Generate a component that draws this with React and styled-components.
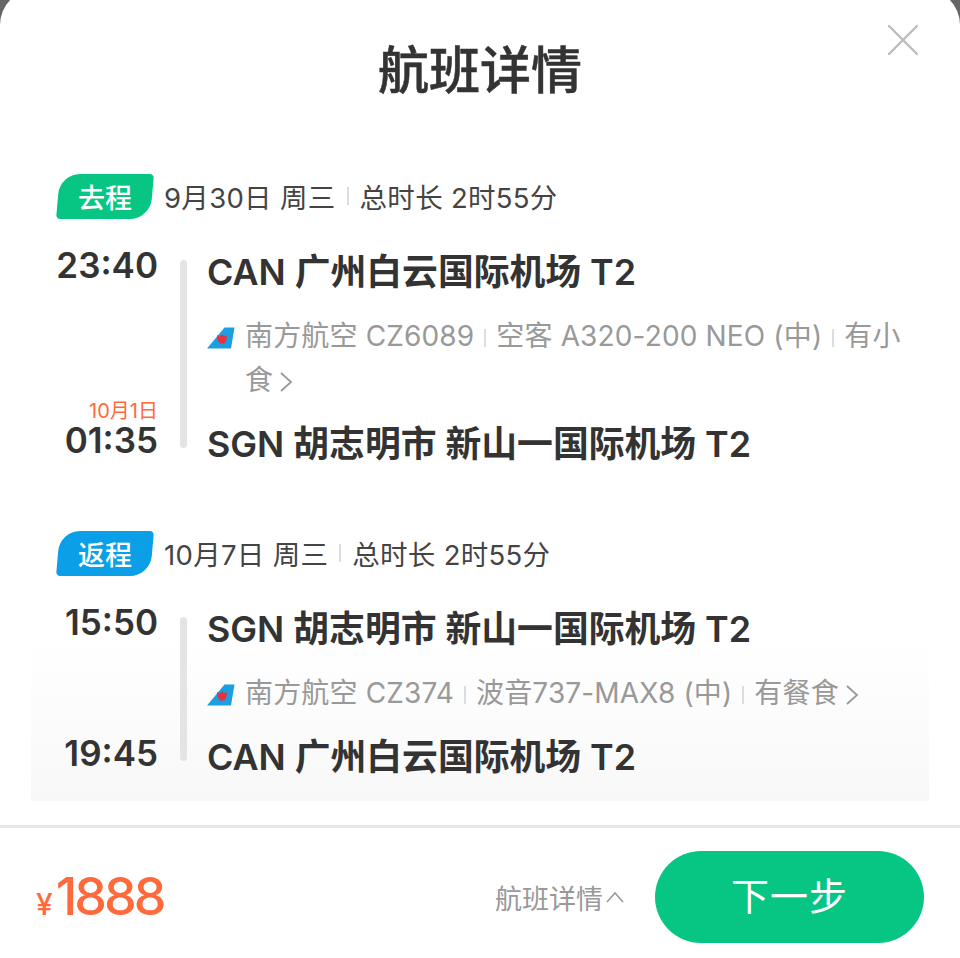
import React from 'react';
import styled, { createGlobalStyle } from 'styled-components';

const GlobalStyle = createGlobalStyle`
  html, body {
    margin: 0;
    padding: 0;
    height: 958px;
    overflow: hidden;
    background: #666666;
    font-family: Inter, "Noto Sans CJK SC", sans-serif;
  }
`;

const Sheet = styled.div`
  width: 960px;
  height: 969px;
  margin-top: -11px;
  background: #ffffff;
  border-radius: 36px 36px 0 0;
  display: flex;
  flex-direction: column;
`;

const Header = styled.header`
  height: 158px;
  padding-top: 11px;
  box-sizing: border-box;
  display: flex;
  justify-content: center;
  position: relative;
`;

const Title = styled.h1`
  margin: 36px 0 0;
  font-size: 51px;
  line-height: 70px;
  font-weight: 500;
  -webkit-text-stroke: 0.5px #333333;
  color: #333333;
`;

const CloseButton = styled.button`
  position: absolute;
  top: 35px;
  right: 41px;
  width: 32px;
  height: 32px;
  padding: 0;
  border: none;
  background: none;
`;

const Body = styled.main`
  flex: 1;
  margin: 0 31px 24px;
  padding: 28px 26px 0;
  background: linear-gradient(#ffffff, #f8f8f8) bottom / 100% 160px no-repeat;
`;

const Section = styled.section`
  height: ${(p) => p.$height}px;
`;

const SectionHead = styled.div`
  display: flex;
  align-items: center;
  height: 45px;
`;

const Tag = styled.span`
  position: relative;
  z-index: 0;
  width: 96px;
  height: 45px;
  display: flex;
  align-items: center;
  justify-content: center;
  font-size: 27px;
  font-weight: 500;
  color: #ffffff;

  &::before {
    content: '';
    position: absolute;
    z-index: -1;
    inset: 0 1px;
    background: ${(p) => p.$color};
    border-radius: 20px 4px 20px 4px;
    transform: skewX(-5deg);
  }
`;

const Summary = styled.div`
  margin: -2px 0 0 11px;
  display: flex;
  align-items: center;
  font-size: 27.5px;
  letter-spacing: 0.3px;
  color: #444444;
  white-space: pre;
`;

const Divider = styled.i`
  display: inline-block;
  width: 2px;
  height: 18px;
  margin: 0 ${(p) => p.$gap || 11}px;
  background: #dddddd;
  vertical-align: -1px;
`;

const Segment = styled.div`
  margin-top: 29px;
  display: grid;
  grid-template-columns: 101px 7px 1fr;
  column-gap: 22px;
`;

const Times = styled.div`
  margin: -5px 0 6px;
  display: flex;
  flex-direction: column;
  justify-content: space-between;
  align-items: flex-end;
`;

const TimeBlock = styled.div`
  display: flex;
  flex-direction: column;
  align-items: flex-end;
`;

const Time = styled.div`
  font-size: 35px;
  line-height: 44px;
  font-weight: 600;
  color: #333333;
`;

const NextDay = styled.div`
  font-size: 20px;
  line-height: 20px;
  margin-bottom: -3px;
  color: #ff6a3d;
`;

const Bar = styled.div`
  width: 7px;
  margin: 12px 0 20px;
  border-radius: 4px;
  background: #e4e4e4;
`;

const Detail = styled.div`
  margin-left: -2px;
`;

const Route = styled.div`
  font-size: 35.8px;
  line-height: 48px;
  font-weight: 600;
  color: #333333;
  white-space: nowrap;
`;

const Info = styled.div`
  margin: 18px 0;
  display: flex;
  align-items: flex-start;
`;

const InfoText = styled.div`
  width: 662px;
  font-size: 28px;
  letter-spacing: 0.15px;
  line-height: 44px;
  color: #999999;
`;

const Tail = styled.svg`
  flex: none;
  width: 28px;
  height: 22px;
  margin: 13px 10px 0 0;
`;

const Chevron = styled.svg`
  width: 14px;
  height: 22px;
  margin-left: 6px;
  vertical-align: -3px;
`;

const Footer = styled.footer`
  height: 133px;
  border-top: 3px solid #e8e8e8;
  box-sizing: border-box;
  padding: 23px 36px 0 36px;
  display: flex;
  align-items: flex-start;
`;

const Price = styled.div`
  flex: 1;
  margin-top: 14px;
  color: #ff6a3d;
  display: flex;
  align-items: baseline;
`;

const Yen = styled.span`
  font-size: 30px;
  font-weight: 500;
  margin-right: 3px;
`;

const Amount = styled.span`
  font-size: 52px;
  line-height: 64px;
  font-weight: 500;
  letter-spacing: -3px;
`;

const DetailToggle = styled.button`
  margin: 29px 31px 0 0;
  padding: 0;
  border: none;
  background: none;
  display: flex;
  align-items: center;
  font: inherit;
  font-size: 27px;
  line-height: 40px;
  color: #999999;
`;

const ToggleCaret = styled.svg`
  width: 18px;
  height: 12px;
  margin: 0 0 6px 3px;
`;

const NextButton = styled.button`
  width: 269px;
  height: 92px;
  padding: 0 0 8px;
  border: none;
  border-radius: 46px;
  background: #07c683;
  color: #ffffff;
  font: inherit;
  font-size: 38px;
  letter-spacing: 1px;
`;

const AirlineTail = () => (
  <Tail viewBox="0 0 28 22">
    <path d="M0 21.5 17.5 0.5H27.5L24 21.5Z" fill="#1a9fe0" />
    <path d="M10 8 13 9.5 15 7 17 9.5 20 8 19.5 12.5 17.5 16.5H12.5L10.5 12.5Z" fill="#e8303f" />
  </Tail>
);

const ChevronRight = () => (
  <Chevron viewBox="0 0 14 22">
    <path d="M2 2 12 11 2 20" fill="none" stroke="#999999" strokeWidth="1.8" />
  </Chevron>
);

const flights = [
  {
    label: '去程',
    color: '#07c683',
    date: '9月30日 周三',
    height: 357,
    infoParts: ['南方航空 CZ6089', '空客 A320-200 NEO (中)', '有小食'],
    dep: { time: '23:40', place: 'CAN 广州白云国际机场 T2' },
    arr: { time: '01:35', place: 'SGN 胡志明市 新山一国际机场 T2', nextDay: '10月1日' },
  },
  {
    label: '返程',
    color: '#0a9fe6',
    date: '10月7日 周三',
    height: 270,
    infoParts: ['南方航空 CZ374', '波音737-MAX8 (中)', '有餐食'],
    dep: { time: '15:50', place: 'SGN 胡志明市 新山一国际机场 T2' },
    arr: { time: '19:45', place: 'CAN 广州白云国际机场 T2' },
  },
];

const FlightSection = ({ flight }) => (
  <Section $height={flight.height}>
    <SectionHead>
      <Tag $color={flight.color}>{flight.label}</Tag>
      <Summary>
        {flight.date}
        <Divider />
        总时长 2时55分
      </Summary>
    </SectionHead>
    <Segment>
      <Times>
        <Time>{flight.dep.time}</Time>
        <TimeBlock>
          {flight.arr.nextDay && <NextDay>{flight.arr.nextDay}</NextDay>}
          <Time>{flight.arr.time}</Time>
        </TimeBlock>
      </Times>
      <Bar />
      <Detail>
        <Route>{flight.dep.place}</Route>
        <Info>
          <AirlineTail />
          <InfoText>
            {flight.infoParts[0]}
            <Divider $gap={10} />
            {flight.infoParts[1]}
            <Divider $gap={10} />
            {flight.infoParts[2]}
            <ChevronRight />
          </InfoText>
        </Info>
        <Route>{flight.arr.place}</Route>
      </Detail>
    </Segment>
  </Section>
);

const App = () => (
  <>
    <GlobalStyle />
    <Sheet>
      <Header>
        <Title>航班详情</Title>
        <CloseButton aria-label="关闭">
          <svg width="32" height="32" viewBox="0 0 32 32">
            <path d="M2 2 30 30M30 2 2 30" stroke="#bdbdbd" strokeWidth="2.4" strokeLinecap="round" />
          </svg>
        </CloseButton>
      </Header>
      <Body>
        {flights.map((flight) => (
          <FlightSection key={flight.label} flight={flight} />
        ))}
      </Body>
      <Footer>
        <Price>
          <Yen>¥</Yen>
          <Amount>1888</Amount>
        </Price>
        <DetailToggle>
          航班详情
          <ToggleCaret viewBox="0 0 18 12">
            <path d="M1 11 9 2 17 11" fill="none" stroke="#999999" strokeWidth="1.6" />
          </ToggleCaret>
        </DetailToggle>
        <NextButton>下一步</NextButton>
      </Footer>
    </Sheet>
  </>
);

export default App;
